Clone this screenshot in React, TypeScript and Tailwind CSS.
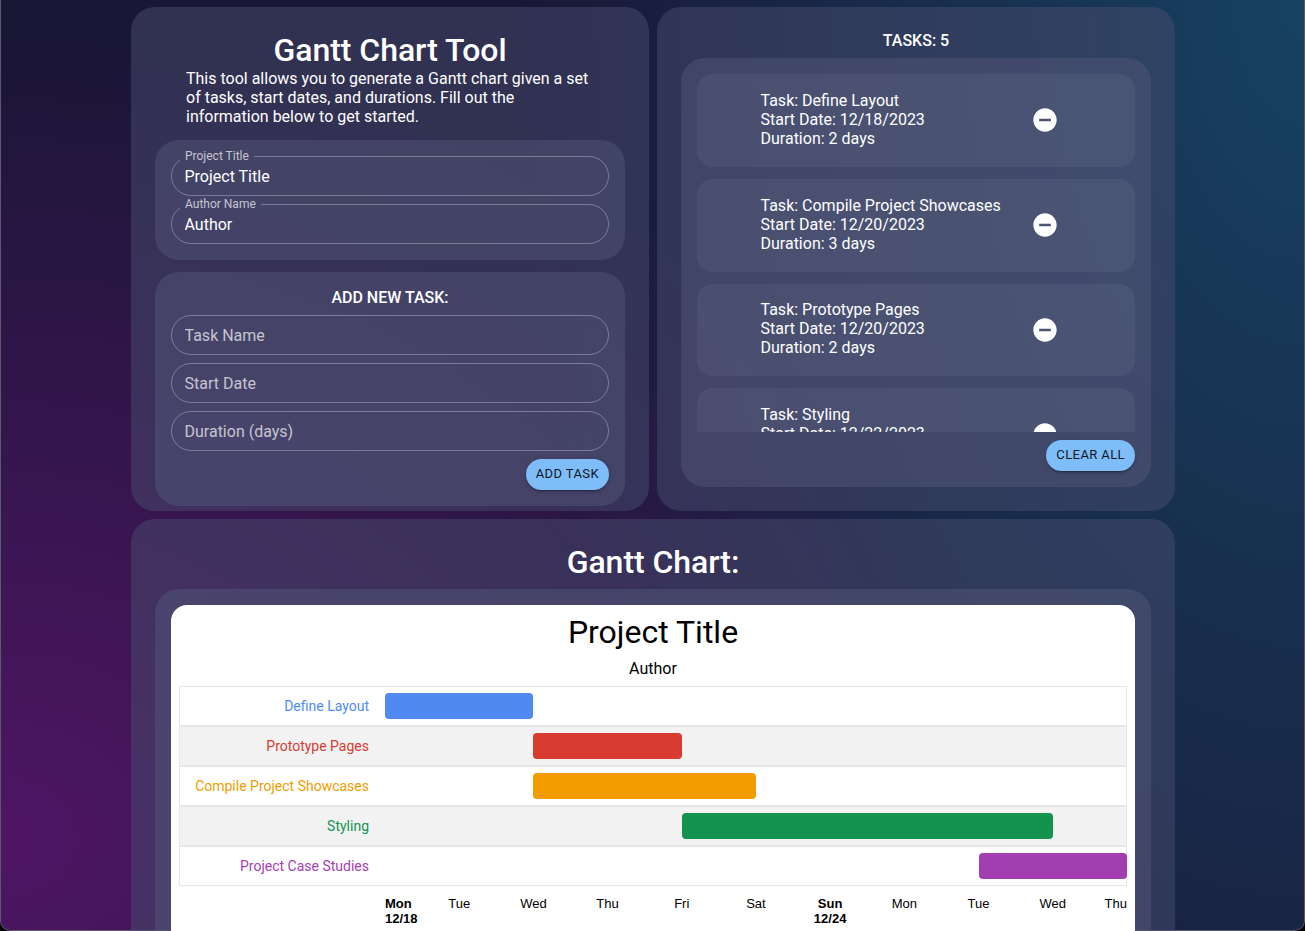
const font = "font-['Roboto',sans-serif]";

const tasks = [
  { name: "Define Layout", start: "12/18/2023", days: 2 },
  { name: "Compile Project Showcases", start: "12/20/2023", days: 3 },
  { name: "Prototype Pages", start: "12/20/2023", days: 2 },
  { name: "Styling", start: "12/22/2023", days: 5 },
];

const DAY = 74.2;

const rows = [
  { name: "Define Layout", from: 0, days: 2, text: "text-[#4f8bf5]", bar: "bg-[#5189f3]" },
  { name: "Prototype Pages", from: 2, days: 2, text: "text-[#d93a30]", bar: "bg-[#d83b30]" },
  { name: "Compile Project Showcases", from: 2, days: 3, text: "text-[#f29d00]", bar: "bg-[#f29c00]" },
  { name: "Styling", from: 4, days: 5, text: "text-[#149350]", bar: "bg-[#149350]" },
  { name: "Project Case Studies", from: 8, days: 2, text: "text-[#a53eb3]", bar: "bg-[#a33eb1]" },
];

const ticks = [
  { day: "Mon", date: "12/18" },
  { day: "Tue" },
  { day: "Wed" },
  { day: "Thu" },
  { day: "Fri" },
  { day: "Sat" },
  { day: "Sun", date: "12/24" },
  { day: "Mon" },
  { day: "Tue" },
  { day: "Wed" },
  { day: "Thu" },
];

const Field = ({ label, value, placeholder }: { label?: string; value?: string; placeholder?: string }) => (
  <div className="relative h-10">
    <input
      readOnly
      value={value ?? ""}
      placeholder={placeholder}
      className="h-full w-full bg-transparent px-[13.5px] text-base text-white outline-none placeholder:text-white/70"
    />
    <fieldset className="pointer-events-none absolute inset-x-0 bottom-0 -top-[5px] rounded-[20px] border border-white/30 px-2">
      {label ? (
        <legend className="h-[11px] px-[5px] text-xs leading-[11px] text-white/70">{label}</legend>
      ) : (
        <legend className="h-[11px] w-0 p-0" />
      )}
    </fieldset>
  </div>
);

const Action = ({ children }: { children: string }) => (
  <button className="h-[31px] rounded-full bg-[#7fbdf8] px-[10px] pb-px text-[13px] font-normal tracking-[0.4px] text-[#10151f] shadow-[0_3px_1px_-2px_rgba(0,0,0,0.2),0_2px_2px_0_rgba(0,0,0,0.14),0_1px_5px_0_rgba(0,0,0,0.12)]">
    {children}
  </button>
);

const MinusIcon = () => (
  <svg viewBox="0 0 24 24" className="h-7 w-7 shrink-0 fill-white">
    <path d="M12 2C6.48 2 2 6.48 2 12s4.48 10 10 10 10-4.48 10-10S17.52 2 12 2zm5 11H7v-2h10v2z" />
  </svg>
);

export default function App() {
  return (
    <div className="h-[931px] w-[1305px] overflow-hidden bg-black">
      <div
        className={`${font} h-[931px] w-[1305px] overflow-hidden rounded-b-[10px] bg-[#1a1636] bg-[radial-gradient(ellipse_1000px_800px_at_0%_90%,#4f1564_0%,rgba(79,21,100,0)_100%),radial-gradient(ellipse_800px_1400px_at_100%_0%,#174262_0%,rgba(23,66,98,0)_100%)] pl-px text-white shadow-[inset_1px_0_0_#5a5a6e,inset_-1px_0_0_#5a5a6e,inset_0_-1px_0_#5a5a6e]`}
      >
        <div className="mx-auto flex w-[1044px] flex-col gap-2 pt-[7px]">
          <div className="grid grid-cols-2 gap-2">
            {/* left panel */}
            <section className="flex h-[504px] flex-col rounded-3xl bg-[rgba(72,75,110,0.5)] p-6">
              <h1 className="text-center text-[32px] font-[480] leading-[38px] tracking-[-0.05px]">Gantt Chart Tool</h1>
              <p className="mx-auto w-[408px] text-base leading-[19px]">
                This tool allows you to generate a Gantt chart given a set of tasks, start dates, and durations. Fill out the information below to get started.
              </p>
              <div className="mt-[14px] flex flex-col gap-2 rounded-3xl bg-[rgba(82,85,120,0.5)] p-4">
                <Field label="Project Title" value="Project Title" />
                <Field label="Author Name" value="Author" />
              </div>
              <div className="mt-3 flex flex-col gap-2 rounded-3xl bg-[rgba(82,85,120,0.5)] p-4">
                <h2 className="h-[19px] text-center text-base font-medium leading-[19px]">ADD NEW TASK:</h2>
                <Field placeholder="Task Name" />
                <Field placeholder="Start Date" />
                <Field placeholder="Duration (days)" />
                <div className="flex justify-end">
                  <Action>ADD TASK</Action>
                </div>
              </div>
            </section>

            {/* right panel */}
            <section className="flex h-[504px] flex-col rounded-3xl bg-[rgba(72,75,110,0.5)] px-6 pt-6">
              <h2 className="h-[27px] text-center text-base font-medium leading-[19px]">TASKS: 5</h2>
              <div className="flex h-[429px] flex-col rounded-3xl bg-[rgba(82,85,120,0.5)] p-4">
                <div className="flex h-[358px] flex-col gap-3 overflow-hidden">
                  {tasks.map((task) => (
                    <div key={task.name} className="flex h-[92.75px] shrink-0 items-center rounded-2xl bg-white/[0.05] pl-[63.5px]">
                      <div className="w-[270.5px] -translate-y-[1.5px] text-base leading-[19px]">
                        <div>Task: {task.name}</div>
                        <div>Start Date: {task.start}</div>
                        <div>Duration: {task.days} days</div>
                      </div>
                      <MinusIcon />
                    </div>
                  ))}
                </div>
                <div className="mt-2 flex justify-end">
                  <Action>CLEAR ALL</Action>
                </div>
              </div>
            </section>
          </div>

          {/* chart panel */}
          <section className="rounded-3xl bg-[rgba(72,75,110,0.5)] px-6 pt-6">
            <h2 className="h-[46px] text-center text-[32px] font-[480] leading-[38px] tracking-[-0.05px]">Gantt Chart:</h2>
            <div className="rounded-3xl bg-[rgba(82,85,120,0.5)] p-4">
              <div className="h-[340px] rounded-2xl bg-white px-2 text-black">
                <h3 className="pt-[8px] text-center text-[32px] font-normal leading-[38px]">Project Title</h3>
                <p className="mt-2 text-center text-base leading-[19px]">Author</p>
                <div className="mt-2 border-x border-[#e6e6e6]">
                  {rows.map((row, i) => (
                    <div
                      key={row.name}
                      className={`flex h-10 items-center border-y border-[#e6e6e6] ${i % 2 === 1 ? "bg-[#f2f2f2]" : "bg-white"}`}
                    >
                      <div className={`w-[189px] shrink-0 text-right text-sm ${row.text}`}>{row.name}</div>
                      <div className="ml-4 flex-1">
                        <div
                          className={`h-[26px] rounded ${row.bar}`}
                          style={{ marginLeft: row.from * DAY, width: row.days * DAY }}
                        />
                      </div>
                    </div>
                  ))}
                </div>
                <div className="mt-[10px] flex pl-[206px] font-['Liberation_Sans',sans-serif] text-[13px] leading-[15px]">
                  {ticks.map((tick, i) => (
                    <div
                      key={i}
                      className={
                        i === 0
                          ? "w-[37.1px] whitespace-nowrap text-left font-bold"
                          : i === ticks.length - 1
                            ? "flex w-[37.1px] justify-end whitespace-nowrap"
                            : `w-[74.2px] whitespace-nowrap text-center ${tick.date ? "font-bold" : ""}`
                      }
                    >
                      {tick.day}
                      {tick.date ? <div>{tick.date}</div> : null}
                    </div>
                  ))}
                </div>
              </div>
            </div>
          </section>
        </div>
      </div>
    </div>
  );
}
